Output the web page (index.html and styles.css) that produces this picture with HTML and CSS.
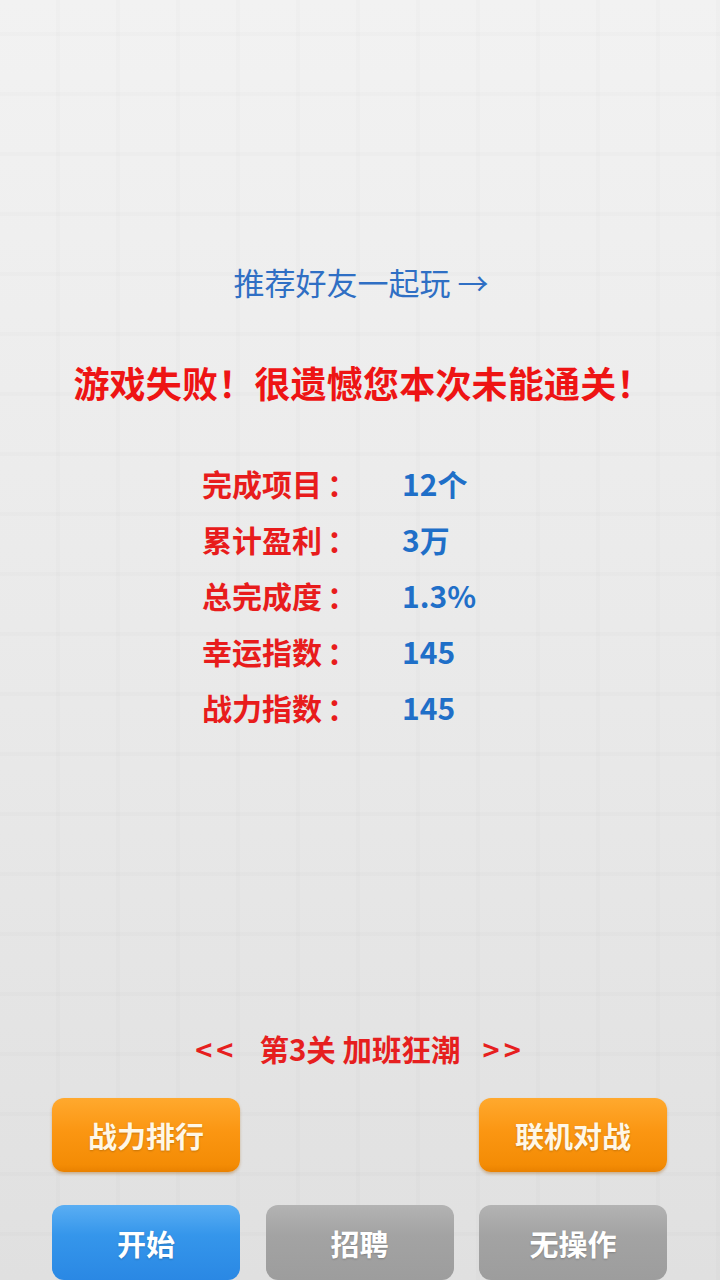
FILE: index.html
```html
<!DOCTYPE html>
<html lang="zh-CN">
<head>
    <meta charset="UTF-8">
    <meta name="viewport" content="width=device-width, initial-scale=1.0">
    <title>游戏结果</title>
    <link rel="stylesheet" href="styles.css">
</head>
<body>

<div class="page">
    <a class="invite" href="#">推荐好友一起玩 →</a>

    <h1 class="result">游戏失败！很遗憾您本次未能通关！</h1>

    <div class="stats">
        <div class="label">完成项目<span class="colon">：</span></div><div class="value">12个</div>
        <div class="label">累计盈利<span class="colon">：</span></div><div class="value">3万</div>
        <div class="label">总完成度<span class="colon">：</span></div><div class="value">1.3%</div>
        <div class="label">幸运指数<span class="colon">：</span></div><div class="value">145</div>
        <div class="label">战力指数<span class="colon">：</span></div><div class="value">145</div>
    </div>

    <div class="bottom">
        <div class="level">
            <span class="arrow">&lt;&lt;</span><span class="level-name">第3关 加班狂潮</span><span class="arrow">&gt;&gt;</span>
        </div>

        <div class="btn-row">
            <button class="btn orange">战力排行</button>
            <div></div>
            <button class="btn orange">联机对战</button>
        </div>
        <div class="btn-row last">
            <button class="btn blue">开始</button>
            <button class="btn gray">招聘</button>
            <button class="btn gray">无操作</button>
        </div>
    </div>
</div>

</body>
</html>
```

FILE: styles.css
```css
html, body {
    margin: 0;
    padding: 0;
}
body {
    font-family: "Noto Sans CJK SC", "Noto Sans", sans-serif;
    width: 720px;
    height: 1280px;
    overflow: hidden;
    background-color: #ebebeb;
    background-image:
        linear-gradient(90deg, rgba(0, 0, 0, 0.012) 4px, transparent 4px),
        linear-gradient(rgba(0, 0, 0, 0.012) 4px, transparent 4px),
        linear-gradient(#f2f2f2, #e9e9e9 55%, #e0e0e0);
    background-size: 60px 60px, 60px 60px, 100% 100%;
    background-position: 56px 32px, 56px 32px, 0 0;
}
.page {
    height: 1280px;
    display: flex;
    flex-direction: column;
    align-items: center;
    box-sizing: border-box;
    padding-top: 262px;
}
.invite {
    display: block;
    height: 40px;
    line-height: 40px;
    font-size: 31px;
    color: #2f6fc4;
    text-decoration: none;
    padding-left: 2px;
}
.result {
    margin: 55px 0 0;
    height: 50px;
    line-height: 50px;
    font-size: 36px;
    font-weight: bold;
    color: #ee1414;
    letter-spacing: 0.2px;
    padding-left: 6px;
}
.stats {
    align-self: stretch;
    margin-top: 48px;
    padding-left: 202px;
    display: grid;
    grid-template-columns: 200px 1fr;
    grid-auto-rows: 56px;
    align-items: center;
    font-size: 30px;
    font-weight: bold;
}
.label {
    color: #e81c1c;
    white-space: nowrap;
}
.colon {
    margin-left: 5px;
}
.value {
    color: #1f6fc8;
}
.bottom {
    margin-top: auto;
    align-self: stretch;
    display: flex;
    flex-direction: column;
}
.level {
    height: 40px;
    line-height: 40px;
    text-align: center;
    color: #e61f1f;
    font-weight: bold;
    font-size: 29.5px;
    margin-bottom: 30px;
    white-space: nowrap;
}
.level .arrow {
    font-size: 29px;
    letter-spacing: 4px;
}
.level .level-name {
    margin: 0 22px;
}
.btn-row {
    display: grid;
    grid-template-columns: repeat(3, 188px);
    justify-content: space-between;
    padding: 0 53px 0 52px;
    margin-bottom: 33px;
}
.btn-row.last {
    margin-bottom: 0;
}
.btn {
    height: 75px;
    border: none;
    border-radius: 12px;
    font-family: inherit;
    font-size: 29px;
    font-weight: bold;
    color: #ffffff;
    text-shadow: 0 1px 2px rgba(0, 0, 0, 0.2);
    padding: 0;
    cursor: pointer;
}
.orange {
    background: linear-gradient(#ffa92e, #fb9612 45%, #f48c05 90%, #e98100);
    box-shadow: 0 2px 3px rgba(160, 90, 0, 0.35);
    color: #fff7e6;
    height: 74px;
}
.blue {
    background: linear-gradient(#5aaef3, #3596eb 40%, #2a88e4);
}
.gray {
    background: linear-gradient(#b3b3b3, #a3a3a3 40%, #9d9d9d);
}
```
